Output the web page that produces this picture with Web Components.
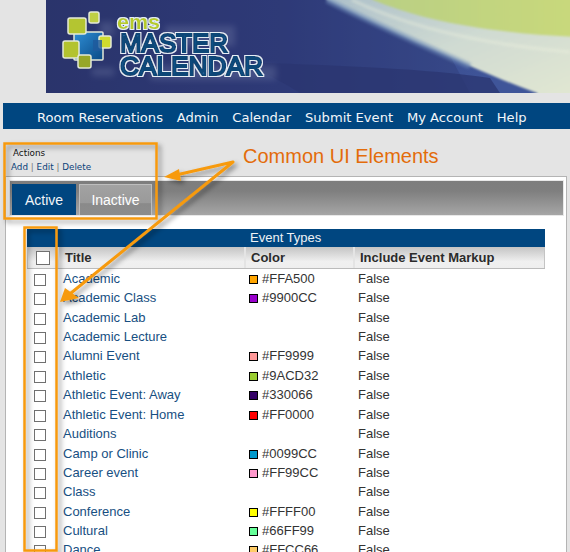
<!DOCTYPE html>
<html>
<head>
<meta charset="utf-8">
<title>EMS Master Calendar</title>
<style>
    html, body { margin: 0; height: 552px; overflow: hidden; background: #e4e4e4; }
    body { position: relative; font-family: "Liberation Sans", Arial, sans-serif; }
</style>
</head>
<body>
<ems-banner></ems-banner>
<ems-nav>
    <a>Room Reservations</a><a>Admin</a><a>Calendar</a><a>Submit Event</a><a>My Account</a><a>Help</a>
</ems-nav>
<ems-panel>
    <ems-actions></ems-actions>
    <ems-tabs></ems-tabs>
    <ems-grid caption="Event Types">
        <ems-row title-text="Academic" color="#FFA500"></ems-row>
        <ems-row title-text="Academic Class" color="#9900CC"></ems-row>
        <ems-row title-text="Academic Lab"></ems-row>
        <ems-row title-text="Academic Lecture"></ems-row>
        <ems-row title-text="Alumni Event" color="#FF9999"></ems-row>
        <ems-row title-text="Athletic" color="#9ACD32"></ems-row>
        <ems-row title-text="Athletic Event: Away" color="#330066"></ems-row>
        <ems-row title-text="Athletic Event: Home" color="#FF0000"></ems-row>
        <ems-row title-text="Auditions"></ems-row>
        <ems-row title-text="Camp or Clinic" color="#0099CC"></ems-row>
        <ems-row title-text="Career event" color="#FF99CC"></ems-row>
        <ems-row title-text="Class"></ems-row>
        <ems-row title-text="Conference" color="#FFFF00"></ems-row>
        <ems-row title-text="Cultural" color="#66FF99"></ems-row>
        <ems-row title-text="Dance" color="#FFCC66"></ems-row>
    </ems-grid>
</ems-panel>
<ems-callouts label="Common UI Elements"></ems-callouts>

<script>
// top banner with the logo and the swoosh
class EmsBanner extends HTMLElement {
    constructor() {
        super();
        this.attachShadow({ mode: 'open' });
        this.shadowRoot.innerHTML = `
            <style>
                :host { display: block; height: 93px; margin: 0 0 10px 46px; }
                svg { display: block; }
                text { font-family: "Liberation Sans", Arial, sans-serif; }
            </style>
            <svg width="524" height="93" viewBox="46 0 524 93">
                <defs>
                    <linearGradient id="navy" x1="0" y1="0" x2="1" y2="0">
                        <stop offset="0" stop-color="#2a3369"/>
                        <stop offset=".45" stop-color="#303c7c"/>
                        <stop offset=".85" stop-color="#3f5599"/>
                    </linearGradient>
                    <linearGradient id="green" x1="0" y1="0" x2="1" y2="0">
                        <stop offset="0" stop-color="#b9cf85"/>
                        <stop offset="1" stop-color="#c9d97b"/>
                    </linearGradient>
                    <linearGradient id="pale" x1="0" y1="0" x2="1" y2="1">
                        <stop offset="0" stop-color="#a9bdc9"/>
                        <stop offset=".5" stop-color="#cfdad2"/>
                        <stop offset="1" stop-color="#e3e8d2"/>
                    </linearGradient>
                    <linearGradient id="cube" x1="0" y1="0" x2="1" y2="1">
                        <stop offset="0" stop-color="#2f8fd6"/>
                        <stop offset="1" stop-color="#0a4a86"/>
                    </linearGradient>
                    <filter id="soft"><feGaussianBlur stdDeviation="3"/></filter>
                    <filter id="edge"><feGaussianBlur stdDeviation="1.5"/></filter>
                    <filter id="tiny" x="-5%" y="-5%" width="110%" height="110%"><feGaussianBlur stdDeviation=".8"/></filter>
                    <filter id="halo" x="-5%" y="-20%" width="110%" height="140%">
                        <feMorphology in="SourceAlpha" operator="dilate" radius="1.2" result="fat"/>
                        <feFlood flood-color="#e6eef5"/>
                        <feComposite in2="fat" operator="in" result="ring"/>
                        <feGaussianBlur in="ring" stdDeviation=".4" result="ring2"/>
                        <feGaussianBlur in="SourceGraphic" stdDeviation=".3" result="body"/>
                        <feMerge><feMergeNode in="ring2"/><feMergeNode in="body"/></feMerge>
                    </filter>
                </defs>
                <rect x="46" y="0" width="524" height="93" fill="url(#navy)"/>
                <path d="M46 0H420L470 93H46Z" fill="#2c3671" opacity=".35"/>
                <path d="M240 62C340 66 420 68 490 78L500 93H300C280 80 260 70 240 62Z" fill="#2b3570" opacity=".75"/>
                <path d="M327 0C370 22 425 46 470 66C495 77 515 85 537 93L540 100H580V-10H320Z" fill="url(#pale)" filter="url(#tiny)"/>
                <path d="M327 0C370 22 425 46 470 66" fill="none" stroke="#6f8cb8" stroke-width="6" opacity=".6" filter="url(#edge)"/>
                <path d="M373 0C405 13 440 22 480 28C515 33 545 36 580 37V-10H365Z" fill="url(#green)" filter="url(#tiny)"/>
                <path d="M352 0C410 28 480 44 570 52" fill="none" stroke="#eef2df" stroke-width="3" opacity=".45" filter="url(#edge)"/>

                <g fill="#7b86ad" opacity=".3" filter="url(#soft)">
                    <rect x="100" y="22" width="14" height="14"/>
                    <rect x="92" y="68" width="22" height="8"/>
                    <rect x="165" y="26" width="70" height="20"/>
                    <rect x="150" y="66" width="126" height="14"/>
                </g>

                <g stroke="#e4e9d8" stroke-width="1.5">
                    <rect x="74" y="32" width="29" height="28" rx="1" fill="url(#cube)"/>
                    <rect x="68" y="18" width="18" height="16" rx="2" fill="#b4c531"/>
                    <rect x="89" y="12" width="10" height="11" rx="2" fill="#bfcf45"/>
                    <rect x="99" y="36" width="12" height="12" rx="2" fill="#cfdc2e"/>
                    <rect x="63" y="41" width="16" height="17" rx="2" fill="#b3c32f"/>
                    <rect x="78" y="55" width="13" height="13" rx="2" fill="#97a72a"/>
                </g>
                <rect x="93" y="40" width="9" height="11" fill="#1f5a9c" opacity=".8"/>

                <text x="117" y="29" font-size="21" font-weight="700" fill="#b7cb2c" filter="url(#halo)" textLength="43" lengthAdjust="spacingAndGlyphs">ems</text>
                <text x="120" y="52" font-size="26" fill="#1d5f98" stroke="#0a4677" stroke-width="2" filter="url(#halo)" textLength="108" lengthAdjust="spacingAndGlyphs">MASTER</text>
                <text x="120" y="75" font-size="26" fill="#1d5f98" stroke="#0a4677" stroke-width="2" filter="url(#halo)" textLength="143" lengthAdjust="spacingAndGlyphs">CALENDAR</text>
            </svg>
        `;
    }
}

class EmsNav extends HTMLElement {
    constructor() {
        super();
        this.attachShadow({ mode: 'open' });
        this.shadowRoot.innerHTML = `
            <style>
                :host {
                    display: flex;
                    align-items: center;
                    gap: 13.8px;
                    height: 26px;
                    margin-left: 3px;
                    padding: 2px 0 0 34px;
                    box-sizing: border-box;
                    background: #004680;
                    color: #f2f6fa;
                    font: 13.1px "DejaVu Sans", Verdana, sans-serif;
                }
            </style>
            <slot></slot>
        `;
    }
}

class EmsPanel extends HTMLElement {
    constructor() {
        super();
        this.attachShadow({ mode: 'open' });
        this.shadowRoot.innerHTML = `
            <style>
                :host { display: block; }
                .panel {
                    margin: 47px 3px 0 5px;
                    padding: 4px 3px 0 4px;
                    background: #fff;
                    border: 1px solid #b4b4b4;
                    border-bottom: 0;
                    height: 380px;
                    box-sizing: border-box;
                    position: relative;
                }
            </style>
            <div class="panel"><slot></slot></div>
        `;
    }
}

class EmsActions extends HTMLElement {
    constructor() {
        super();
        this.attachShadow({ mode: 'open' });
        this.shadowRoot.innerHTML = `
            <style>
                :host {
                    display: block;
                    position: absolute;
                    left: 5px;
                    top: -31px;
                    font: 8.8px "DejaVu Sans", Verdana, sans-serif;
                    line-height: 14px;
                }
                .title { color: #111; padding-left: 2px; }
                .links { color: #0c4279; }
                i { color: #777; font-style: normal; }
            </style>
            <div class="title">Actions</div>
            <div class="links">Add <i>|</i> Edit <i>|</i> Delete</div>
        `;
    }
}

class EmsTabs extends HTMLElement {
    constructor() {
        super();
        this.attachShadow({ mode: 'open' });
        this.shadowRoot.innerHTML = `
            <style>
                :host {
                    display: flex;
                    align-items: flex-end;
                    gap: 3px;
                    height: 34px;
                    padding-left: 2px;
                    background: linear-gradient(#7d7d7d 0, #7f7f7f 30%, #a6a6a6 100%);
                    box-shadow: 0 0 0 1px #e8e8e8;
                    font: 14px "Liberation Sans", Arial, sans-serif;
                }
                div {
                    display: flex;
                    align-items: center;
                    justify-content: center;
                    height: 31px;
                    box-sizing: border-box;
                    color: #f2f5f8;
                }
                .on { width: 64px; background: #004680; }
                .off {
                    width: 73px;
                    border: 1px solid #bdbdbd;
                    border-bottom: 0;
                    background: linear-gradient(#a2a2a2, #9a9a9a 60%, #8a8a8a 62%, #8c8c8c);
                    color: #fff;
                }
            </style>
            <div class="on">Active</div>
            <div class="off">Inactive</div>
        `;
    }
}

class EmsGrid extends HTMLElement {
    constructor() {
        super();
        this.attachShadow({ mode: 'open' });
        this.shadowRoot.innerHTML = `
            <style>
                :host {
                    display: block;
                    margin: 14px 18px 0 17px;
                    font: 13px "Liberation Sans", Arial, sans-serif;
                }
                .caption {
                    height: 18px;
                    line-height: 18px;
                    padding-left: 223px;
                    background: #004680;
                    color: #eef2f6;
                }
                .head {
                    display: grid;
                    grid-template-columns: 32px 187px 109px 1fr;
                    height: 22px;
                    box-sizing: border-box;
                    border-bottom: 1px solid #bbb;
                    background: linear-gradient(#c4c4c4, #f0f0f0 70%, #eee);
                    color: #2b2b2b;
                    font-weight: 700;
                }
                .head > div {
                    display: flex;
                    align-items: center;
                    padding-left: 5px;
                    border-right: 2px solid #e4e4e4;
                }
                .head > div:first-child { padding-left: 9px; box-shadow: inset 1px 0 #ccc; }
                .head > div:nth-child(2) { padding-left: 6px; }
                .head > div:last-child { border-right: 1px solid #c4c4c4; }
                .box { width: 12px; height: 12px; border: 1px solid #707070; background: #fff; box-sizing: content-box; }
                /* the source table's rows come out uneven, 19 and 20px */
                .rows { display: grid; grid-template-rows: 19px 20px 19px 19px 20px 19px 20px 19px 20px 19px 19px 20px 19px 19px 20px; }
            </style>
            <div class="caption">${this.getAttribute('caption')}</div>
            <div class="head">
                <div><span class="box"></span></div>
                <div>Title</div>
                <div>Color</div>
                <div>Include Event Markup</div>
            </div>
            <div class="rows"><slot></slot></div>
        `;
    }
}

class EmsRow extends HTMLElement {
    constructor() {
        super();
        this.attachShadow({ mode: 'open' });
        const color = this.getAttribute('color');
        const swatch = color
            ? `<span class="swatch" style="background:${color}"></span>${color}`
            : '';
        this.shadowRoot.innerHTML = `
            <style>
                :host {
                    display: grid;
                    grid-template-columns: 36px 186px 109px 1fr;
                    align-items: start;
                    padding-top: 2px;
                    color: #333;
                    font: 13px/15px "Liberation Sans", Arial, sans-serif;
                }
                .check { display: flex; padding: 3px 0 0 7px; }
                .box { width: 10px; height: 10px; border: 1px solid #707070; background: #fff; }
                .title { color: #174f82; }
                .color { display: flex; align-items: center; gap: 4px; }
                .swatch { width: 7px; height: 7px; border: 1px solid #000; margin-top: 2px; }
            </style>
            <div class="check"><span class="box"></span></div>
            <div class="title">${this.getAttribute('title-text')}</div>
            <div class="color">${swatch}</div>
            <div>False</div>
        `;
    }
}

// orange annotations drawn on top of the screenshot
class EmsCallouts extends HTMLElement {
    constructor() {
        super();
        this.attachShadow({ mode: 'open' });
        this.shadowRoot.innerHTML = `
            <style>
                :host { display: block; position: absolute; inset: 0; pointer-events: none; }
                svg { display: block; position: absolute; inset: 0; }
                .label {
                    position: absolute;
                    left: 243px;
                    top: 145px;
                    color: #e36c0a;
                    font: 20px "Liberation Sans", Arial, sans-serif;
                    white-space: nowrap;
                }
            </style>
            <svg width="570" height="552" viewBox="0 0 570 552">
                <defs>
                    <filter id="shadow" x="-20%" y="-20%" width="140%" height="140%">
                        <feDropShadow dx="3" dy="3" stdDeviation="2.5" flood-color="#000" flood-opacity=".4"/>
                    </filter>
                </defs>
                <g filter="url(#shadow)" fill="none" stroke="#f79a0e" stroke-width="2.5">
                    <rect x="4.5" y="143.5" width="152" height="75"/>
                    <rect x="24.5" y="227.5" width="32" height="323"/>
                </g>
                <g filter="url(#shadow)">
                    <path d="M233 162L176 175M233 162L71 293" fill="none" stroke="#f79a0e" stroke-width="3" stroke-linecap="round"/>
                    <path d="M164 177L179 169L181 181Z" fill="#f79a0e"/>
                    <path d="M60 302L65 288L79 298Z" fill="#f79a0e"/>
                </g>
            </svg>
            <div class="label">${this.getAttribute('label')}</div>
        `;
    }
}

customElements.define('ems-banner', EmsBanner);
customElements.define('ems-nav', EmsNav);
customElements.define('ems-panel', EmsPanel);
customElements.define('ems-actions', EmsActions);
customElements.define('ems-tabs', EmsTabs);
customElements.define('ems-grid', EmsGrid);
customElements.define('ems-row', EmsRow);
customElements.define('ems-callouts', EmsCallouts);
</script>
</body>
</html>
